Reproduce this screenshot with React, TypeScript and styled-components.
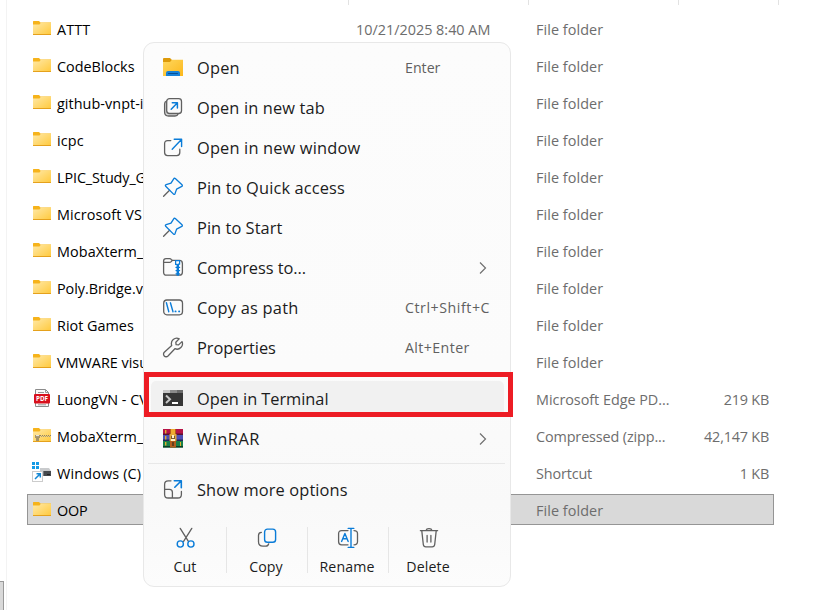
import React from "react";
import styled, { createGlobalStyle, css } from "styled-components";

const Global = createGlobalStyle`
  *, *::before, *::after { box-sizing: border-box; }
  body { margin: 0; background: #fff; overflow: hidden; }
  svg { display: block; flex: none; }
`;

const Window = styled.div`
  position: relative;
  width: 832px;
  height: 610px;
  display: flex;
  overflow: hidden;
  background: #fff;
  font-family: "Open Sans", "Noto Sans", sans-serif;
`;

const NavPane = styled.div`
  width: 7px;
  flex: none;
  display: flex;
  flex-direction: column;
  justify-content: flex-end;
  border-right: 1px solid #f3f3f3;
`;

const NavItemEdge = styled.div`
  width: 4px;
  height: 29px;
  background: #d9d9d9;
  border: solid #999;
  border-width: 1px 1px 0 0;
`;

const FilePane = styled.div`
  flex: 1;
  display: flex;
  flex-direction: column;
`;

const ColumnHeader = styled.div`
  display: grid;
  grid-template-columns: 342px 180px 150px 100px;
  height: 5px;
  margin-bottom: 8px;
`;

const HeaderCell = styled.div`
  border-right: 1px solid #e2e2e2;
`;

const FileList = styled.div`
  display: flex;
  flex-direction: column;
  gap: 6px;
  padding-left: 20px;
`;

const FileRow = styled.div<{ $selected?: boolean }>`
  display: grid;
  grid-template-columns: 323px 180px 150px 83px;
  align-items: center;
  width: 747px;
  height: 31px;
  padding-left: 5px;
  border: 1px solid transparent;
  ${(p) => p.$selected && css`background: #d9d9d9; border-color: #959595;`}
`;

const NameCell = styled.div`
  display: flex;
  align-items: center;
  gap: 5px;
`;

const IconSlot = styled.div`
  width: 19px;
  height: 22px;
  margin-top: 1px;
  display: flex;
  align-items: center;
`;

const FileText = styled.span<{ $muted?: boolean; $right?: boolean; $track?: number }>`
  padding-top: 2px;
  font-size: 14.4px;
  line-height: 20px;
  white-space: nowrap;
  color: ${(p) => (p.$muted ? "#6d6d6d" : "#000")};
  text-align: ${(p) => (p.$right ? "right" : "left")};
  letter-spacing: ${(p) => p.$track ?? 0}px;
`;

const Menu = styled.div`
  position: absolute;
  left: 143px;
  top: 42px;
  width: 368px;
  height: 545px;
  padding: 5px 4px 0 1px;
  display: flex;
  flex-direction: column;
  background: linear-gradient(#fcfcfc 0, #fbfbfb 60%, #f9f9f9 85%, #fcfcfc 100%);
  border: 1px solid #e8e8e8;
  border-radius: 11px;
`;

const MenuItem = styled.div`
  display: grid;
  grid-template-columns: 22px 208px 1fr;
  column-gap: 13px;
  align-items: center;
  height: 40px;
  padding-left: 17px;
`;

const HoverItem = styled(MenuItem)`
  height: 36px;
  margin: 2px 2px 2px 6px;
  padding-left: 11px;
  background: #f1f1f1;
  border-radius: 5px;
`;

const Label = styled.span<{ $track?: number }>`
  font-size: 16.4px;
  line-height: 24px;
  white-space: nowrap;
  color: #1c1c1c;
  letter-spacing: ${(p) => p.$track ?? 0}px;
`;

const Shortcut = styled.span<{ $track?: number }>`
  margin-left: -13px;
  font-size: 14.2px;
  line-height: 20px;
  white-space: nowrap;
  color: #606060;
  letter-spacing: ${(p) => p.$track ?? 0}px;
`;

const ChevronSlot = styled.span`
  justify-self: end;
  margin-right: 19px;
`;

const Separator = styled.div<{ $before: number; $after: number }>`
  height: 1px;
  margin: ${(p) => p.$before}px 1px ${(p) => p.$after}px 3px;
  background: #e8e8e8;
  flex: none;
`;

const Actions = styled.div`
  display: flex;
  margin-top: 17px;
`;

const Action = styled.div`
  width: 81px;
  height: 46px;
  display: flex;
  flex-direction: column;
  align-items: center;
  gap: 8px;
  &:not(:last-child) { box-shadow: 1px 0 0 #e6e6e6; }
`;

const ActionLabel = styled.span`
  margin-left: -1px;
  font-size: 14.2px;
  line-height: 20px;
  color: #1c1c1c;
  letter-spacing: 0.1px;
`;

const Highlight = styled.div`
  position: absolute;
  left: 144px;
  top: 372px;
  width: 369px;
  height: 45px;
  border: 5px solid #ed1c24;
`;

const GREY = "#606060";
const BLUE = "#0a7cd8";

const Folder = ({ zip }: { zip?: boolean }) => (
  <svg width="19" height="22" viewBox="0 0 19 22">
    <defs>
      <linearGradient id="folderFill" x1="0" y1="0" x2="1" y2="1">
        <stop offset="0" stopColor="#ffe9a8" />
        <stop offset="1" stopColor="#ffc93c" />
      </linearGradient>
    </defs>
    <path d="M0 3.5Q0 3 .6 3H6l1.5 1.5H18V9H0z" fill="#f6b31b" />
    <path d="M0 6.5h6.5L8 4.6h10V17H0z" fill="url(#folderFill)" />
    <path d="M0 16.5h18" stroke="#e5a11c" strokeWidth="1" />
    {zip && (
      <g>
        <path d="M3 10.5h15" stroke="#8b8169" strokeWidth="1" strokeDasharray="1 1" />
        <path d="M3 11.5h15" stroke="#a09a88" strokeWidth="1" strokeDasharray="1 1" strokeDashoffset="1" />
        <path d="M2 10h5v3H6v3H3v-3H2z" fill="#a4936a" />
        <path d="M3 10.6h3" stroke="#eee" />
      </g>
    )}
  </svg>
);

const PdfIcon = () => (
  <svg width="19" height="22" viewBox="0 1 19 22">
    <path d="M2.5 2.5h10l3 3v14h-13z" fill="#fafafa" stroke="#8b8b8b" />
    <path d="M12.5 2.5v3h3M5 5.5h6M5 17.8h8" fill="none" stroke="#999" />
    <rect x="1" y="7" width="16" height="9.5" rx="1" fill="#d8101c" />
    <text x="9" y="14" textAnchor="middle" fontFamily="Open Sans, sans-serif" fontWeight="700" fontSize="6.3" fill="#fff">PDF</text>
  </svg>
);

const DriveIcon = () => (
  <svg width="19" height="22" viewBox="0 0 19 22" overflow="visible">
    <path d="M-1 0h3v3h-3zM3 0h3v3H3zM-1 4h3v3h-3zM3 4h3v3H3z" fill="#159be6" />
    <path d="M7 6h9l2 3H7z" fill="#c9cbcd" />
    <path d="M8 9h10v5H8z" fill="#45494d" />
    <path d="M8 9h3v5H8z" fill="#73777b" />
    <path d="M14 12.5h3" stroke="#222" />
    <rect x="-.5" y="9.5" width="10" height="10" fill="#fff" stroke="#ccc" />
    <path d="M2 17l5-5M3.5 11.8h3.8v3.8" fill="none" stroke="#1487d4" strokeWidth="1.5" />
  </svg>
);

const MenuSvg = ({ children }: { children: React.ReactNode }) => (
  <svg width="22" height="22" viewBox="0 0 22 22" fill="none" stroke={GREY} strokeWidth="1.3" strokeLinecap="round" strokeLinejoin="round">
    {children}
  </svg>
);

const ExplorerIcon = () => (
  <MenuSvg>
    <defs>
      <linearGradient id="explorerFill" x1="0" y1="0" x2="1" y2="1">
        <stop offset="0" stopColor="#ffd75e" />
        <stop offset="1" stopColor="#fcb81c" />
      </linearGradient>
    </defs>
    <g stroke="none">
      <path d="M1 2q0-1 1-1h6l2 2v4H1z" fill="#dd9a0a" />
      <path d="M1 5h7l2-2.3h11V19H1z" fill="url(#explorerFill)" />
      <path d="M4 19v-3q0-2 2-2h10q2 0 2 2v3z" fill="#1681d8" />
      <path d="M6.5 16.5h9" stroke="#064e94" strokeWidth="1" />
    </g>
  </MenuSvg>
);

const NewTabIcon = () => (
  <MenuSvg>
    <path d="M4.5 4.2Q2.6 4.7 2.6 7v8q0 4 4 4H13q2.5 0 3-2" fill="#d8d8d8" />
    <rect x="4.7" y="1.7" width="14.8" height="14.8" rx="2.8" fill="#fafafa" />
    <path d="M9.2 12.3l6-6.2M10.3 5.8h5.1v5.1" stroke={BLUE} strokeWidth="1.5" />
  </MenuSvg>
);

const NewWindowIcon = () => (
  <MenuSvg>
    <path d="M8.8 3.6H5.6Q2.6 3.6 2.6 6.6v9q0 3 3 3h9.2q3 0 3-3v-3.4" />
    <path d="M10.2 12.2L19.4 2.6M12.2 2.2h7.4v7.4" stroke={BLUE} strokeWidth="1.4" />
  </MenuSvg>
);

const PinIcon = () => (
  <MenuSvg>
    <path d="M1.6 19.2l6-6" />
    <path d="M13.3 1.6q-.9-.8-1.6.2L9 6.2 4.2 7.7q-1.4.5-.5 1.5l7.8 7.9q1 .9 1.5-.4l1.6-4.6 5.2-2.7q1-.8.2-1.6z" stroke={BLUE} />
  </MenuSvg>
);

const CompressIcon = () => (
  <MenuSvg>
    <path d="M1.6 5V4q0-2.4 2.4-2.4h3.6q1 0 1.6.8l1 1h7.2q3 0 3 3v8.8q0 3-3 3H4.6q-3 0-3-3V5" />
    <path d="M1.8 5.4h5.7q1 0 1.7-.8l1-1.1" />
    <path d="M13.6 3.6h4v3.6h-1.2v11M13.6 3.6v3.8h1.6v10.8M14 10.4h3.6M14 13.6h3.6M14 16.8h3.6" stroke={BLUE} strokeWidth="1.2" />
  </MenuSvg>
);

const CopyPathIcon = () => (
  <MenuSvg>
    <rect x="1.7" y="3" width="18.8" height="14.8" rx="3.2" />
    <path d="M4.4 5.8l2.4 9M8.4 5.8l2.6 9" stroke={BLUE} strokeWidth="1.4" />
    <path d="M13.4 14.4h.3M17 14.4h.3" stroke={BLUE} strokeWidth="1.7" />
  </MenuSvg>
);

const WrenchIcon = () => (
  <MenuSvg>
    <path d="M17.2 1.8A5.4 5.4 0 0 0 9.7 8.4L2.3 15.2a2.6 2.6 0 1 0 3.7 3.8l6.9-7.3A5.4 5.4 0 0 0 20 4.6l-3.4 3.3-2.5-.2-.3-2.5z" />
  </MenuSvg>
);

const TerminalIcon = () => (
  <MenuSvg>
    <g stroke="none">
      <path d="M1 2h20v3H1z" fill="#8b8b8b" />
      <path d="M1 2h7v3H1z" fill="#c6c6c6" />
      <path d="M15 2h6v3h-6z" fill="#6b6b6b" />
      <path d="M1 5h20v13H1z" fill="#363636" />
    </g>
    <path d="M4 7.5l4 3.8-4 3.7" stroke="#c7c7c7" strokeWidth="2" strokeLinecap="butt" strokeLinejoin="miter" />
    <path d="M10 15h6" stroke="#fff" strokeWidth="2" strokeLinecap="butt" />
  </MenuSvg>
);

const WinRarIcon = () => (
  <MenuSvg>
    <g stroke="none">
      <path d="M1 1h20v6H1z" fill="#b71446" />
      <path d="M1 5.5h20V7H1z" fill="#5c1230" />
      <path d="M1 7h20v6H1z" fill="#4d50b5" />
      <path d="M1 11.5h20V13H1z" fill="#23265a" />
      <path d="M1 13h20v6.5H1z" fill="#18804a" />
      <path d="M1 18h20v1.5H1z" fill="#0d3d27" />
      <path d="M3 2h1.4v3.5H3zM3 8h1.4v3.5H3zM3 14h1.4v3.5H3zM18 14h1v4h-1z" fill="#e0b02d" />
      <path d="M8 1h6v18.5H8z" fill="#b35d1c" />
      <path d="M9 1h4v5H9z" fill="#efaa2f" />
      <path d="M7.5 6h7v7h-7z" fill="#e1a63b" />
      <path d="M9 8h4v4H9z" fill="#7a5a32" />
      <path d="M10 7h2v3h-2zM9 11h4v2H9z" fill="#fff2c9" />
      <path d="M10 14h2v4h-2z" fill="#64401e" />
    </g>
  </MenuSvg>
);

const MoreIcon = () => (
  <MenuSvg>
    <path d="M9 1.8H6.2Q2.6 1.8 2.6 5.4v10q0 3.6 3.6 3.6h9.6q3.6 0 3.6-3.6v-3M2.6 10.3h4.8q3 0 3 3V19" />
    <path d="M12.8 8.2l6-6M12.3 1.8h7v7" stroke={BLUE} strokeWidth="1.6" />
  </MenuSvg>
);

const CutIcon = () => (
  <MenuSvg>
    <path d="M5.2 1.4l8.2 13M16.8 1.4l-8.2 13" />
    <circle cx="5.3" cy="17" r="3.1" stroke={BLUE} strokeWidth="1.4" />
    <circle cx="15.9" cy="17" r="3.1" stroke={BLUE} strokeWidth="1.4" />
  </MenuSvg>
);

const CopyIcon = () => (
  <MenuSvg>
    <path d="M5.4 5.3Q2.5 5.5 2.5 8.4v6.4q0 4.4 4.4 4.4H9.7q2.3 0 3-2.4" />
    <rect x="8.6" y="2.1" width="11" height="13.2" rx="2.8" stroke={BLUE} strokeWidth="1.4" />
  </MenuSvg>
);

const RenameIcon = () => (
  <MenuSvg>
    <path d="M11 3.6H4.6q-3 0-3 3v8.2q0 3 3 3H11M17 3.6q3.5 0 3.5 3v8.2q0 3-3.5 3" />
    <path d="M14 1.6v18.8M11.2 1.4h5.6M11.2 20.4h5.6M4.6 14.4l3.3-8 3.3 8M5.8 11.8h4.2" stroke={BLUE} strokeWidth="1.4" />
  </MenuSvg>
);

const DeleteIcon = () => (
  <MenuSvg>
    <path d="M2.4 3.7h17.2M8.2 3.5Q8.4 1.6 11 1.6t2.8 1.9M3.8 3.9l1.5 13.6q.3 2.4 2.5 2.4h6.4q2.2 0 2.5-2.4l1.5-13.6M9.1 8.5v6.6M12.9 8.5v6.6" />
  </MenuSvg>
);

const Chevron = () => (
  <svg width="8" height="14" viewBox="0 0 8 14" fill="none" stroke="#707070" strokeWidth="1.2">
    <path d="M1 1.5L6.5 7 1 12.5" />
  </svg>
);

type FileEntry = {
  name: string;
  type: string;
  icon?: "pdf" | "zip" | "drive";
  date?: string;
  size?: string;
  track?: number;
  typeTrack?: number;
  selected?: boolean;
};

const files: FileEntry[] = [
  { name: "ATTT", type: "File folder", date: "10/21/2025 8:40 AM", track: 0.1 },
  { name: "CodeBlocks", type: "File folder" },
  { name: "github-vnpt-ict", type: "File folder", track: 0.05 },
  { name: "icpc", type: "File folder", track: 0.1 },
  { name: "LPIC_Study_Guide", type: "File folder", track: -0.1 },
  { name: "Microsoft VS Code", type: "File folder", track: 0.1 },
  { name: "MobaXterm_Portable", type: "File folder", track: 0.1 },
  { name: "Poly.Bridge.v1", type: "File folder", track: -0.05 },
  { name: "Riot Games", type: "File folder" },
  { name: "VMWARE visual", type: "File folder" },
  { name: "LuongVN - CV", type: "Microsoft Edge PD...", size: "219 KB", icon: "pdf", typeTrack: -0.03 },
  { name: "MobaXterm_Portable", type: "Compressed (zipp...", size: "42,147 KB", icon: "zip", track: 0.1, typeTrack: -0.12 },
  { name: "Windows (C)", type: "Shortcut", size: "1 KB", icon: "drive", track: 0.15, typeTrack: -0.15 },
  { name: "OOP", type: "File folder", selected: true, track: -0.2 },
];

const FileIcon = ({ kind }: { kind?: FileEntry["icon"] }) => {
  if (kind === "pdf") return <PdfIcon />;
  if (kind === "drive") return <DriveIcon />;
  return <Folder zip={kind === "zip"} />;
};

type Command = { label: string; icon: React.ReactNode; shortcut?: string; submenu?: boolean; track?: number; keyTrack?: number };

const commands: Command[] = [
  { label: "Open", icon: <ExplorerIcon />, shortcut: "Enter", track: 0.2 },
  { label: "Open in new tab", icon: <NewTabIcon />, track: 0.13 },
  { label: "Open in new window", icon: <NewWindowIcon />, track: 0.16 },
  { label: "Pin to Quick access", icon: <PinIcon />, track: 0.12 },
  { label: "Pin to Start", icon: <PinIcon />, track: 0.05 },
  { label: "Compress to...", icon: <CompressIcon />, submenu: true, track: -0.05 },
  { label: "Copy as path", icon: <CopyPathIcon />, shortcut: "Ctrl+Shift+C", track: 0.22, keyTrack: 0.55 },
  { label: "Properties", icon: <WrenchIcon />, shortcut: "Alt+Enter", track: -0.05, keyTrack: 0.4 },
];

const terminal: Command = { label: "Open in Terminal", icon: <TerminalIcon />, track: -0.05 };
const winrar: Command = { label: "WinRAR", icon: <WinRarIcon />, submenu: true, track: 0.5 };
const more: Command = { label: "Show more options", icon: <MoreIcon />, track: 0.12 };

const CommandContent = ({ command }: { command: Command }) => (
  <>
    {command.icon}
    <Label $track={command.track}>{command.label}</Label>
    {command.shortcut && <Shortcut $track={command.keyTrack}>{command.shortcut}</Shortcut>}
    {command.submenu && <ChevronSlot><Chevron /></ChevronSlot>}
  </>
);

const actions = [
  { label: "Cut", icon: <CutIcon /> },
  { label: "Copy", icon: <CopyIcon /> },
  { label: "Rename", icon: <RenameIcon /> },
  { label: "Delete", icon: <DeleteIcon /> },
];

export default function App() {
  return (
    <Window>
      <Global />
      <NavPane><NavItemEdge /></NavPane>
      <FilePane>
        <ColumnHeader><HeaderCell /><HeaderCell /><HeaderCell /><HeaderCell /></ColumnHeader>
        <FileList>
          {files.map((file, i) => (
            <FileRow key={i} $selected={file.selected}>
              <NameCell>
                <IconSlot><FileIcon kind={file.icon} /></IconSlot>
                <FileText $track={file.track}>{file.name}</FileText>
              </NameCell>
              <FileText $muted>{file.date}</FileText>
              <FileText $muted $track={file.typeTrack ?? 0.07}>{file.type}</FileText>
              <FileText $muted $right $track={-0.2}>{file.size}</FileText>
            </FileRow>
          ))}
        </FileList>
      </FilePane>
      <Menu>
        {commands.map((command) => (
          <MenuItem key={command.label}><CommandContent command={command} /></MenuItem>
        ))}
        <Separator $before={5} $after={5} />
        <HoverItem><CommandContent command={terminal} /></HoverItem>
        <MenuItem><CommandContent command={winrar} /></MenuItem>
        <Separator $before={4} $after={6} />
        <MenuItem><CommandContent command={more} /></MenuItem>
        <Actions>
          {actions.map((action) => (
            <Action key={action.label}>
              {action.icon}
              <ActionLabel>{action.label}</ActionLabel>
            </Action>
          ))}
        </Actions>
      </Menu>
      <Highlight />
    </Window>
  );
}
